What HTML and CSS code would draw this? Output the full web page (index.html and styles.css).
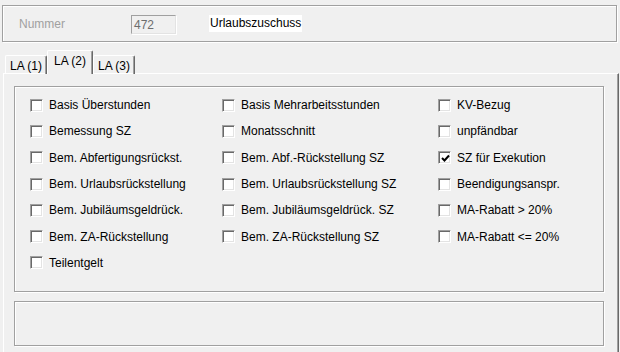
FILE: index.html
```html
<!DOCTYPE html>
<html lang="de">
<head>
    <meta charset="UTF-8">
    <title>Lohnart Urlaubszuschuss</title>
    <link rel="stylesheet" href="styles.css">
</head>
<body>
    <div class="head">
        <span class="lbl-nr">Nummer</span>
        <span class="nr-box">472</span>
        <span class="bez">Urlaubszuschuss</span>
    </div>

    <div class="tabs">
        <div class="tab">LA (1)</div>
        <div class="tab active">LA (2)</div>
        <div class="tab">LA (3)</div>
    </div>

    <div class="panel">
        <div class="group checks">
            <label class="chk"><span class="box"></span>Basis Überstunden</label>
            <label class="chk"><span class="box"></span>Basis Mehrarbeitsstunden</label>
            <label class="chk"><span class="box"></span>KV-Bezug</label>

            <label class="chk"><span class="box"></span>Bemessung SZ</label>
            <label class="chk"><span class="box"></span>Monatsschnitt</label>
            <label class="chk"><span class="box"></span>unpfändbar</label>

            <label class="chk"><span class="box"></span>Bem. Abfertigungsrückst.</label>
            <label class="chk"><span class="box"></span>Bem. Abf.-Rückstellung SZ</label>
            <label class="chk"><span class="box on"><svg width="9" height="9" viewBox="0 0 9 9"><path d="M1 4 L3.5 6.5 L8 1.5" fill="none" stroke="#000" stroke-width="2"/></svg></span>SZ für Exekution</label>

            <label class="chk"><span class="box"></span>Bem. Urlaubsrückstellung</label>
            <label class="chk"><span class="box"></span>Bem. Urlaubsrückstellung SZ</label>
            <label class="chk"><span class="box"></span>Beendigungsanspr.</label>

            <label class="chk"><span class="box"></span>Bem. Jubiläumsgeldrück.</label>
            <label class="chk"><span class="box"></span>Bem. Jubiläumsgeldrück. SZ</label>
            <label class="chk"><span class="box"></span>MA-Rabatt &gt; 20%</label>

            <label class="chk"><span class="box"></span>Bem. ZA-Rückstellung</label>
            <label class="chk"><span class="box"></span>Bem. ZA-Rückstellung SZ</label>
            <label class="chk"><span class="box"></span>MA-Rabatt &lt;= 20%</label>

            <label class="chk"><span class="box"></span>Teilentgelt</label>
        </div>
        <div class="group bottom"></div>
    </div>
</body>
</html>
```

FILE: styles.css
```css
body{
    margin: 0;
    width: 620px;
    height: 352px;
    background: #f0f0f0;
    font-family: "Liberation Sans", Arial, sans-serif;
    font-size: 12px;
    color: #000;
    overflow: hidden;
}
.head{
    margin: 5px 3px 0 2px;
    height: 35px;
    border: 1px solid #a0a0a0;
    box-shadow: inset 1px 1px 0 #fff, 1px 1px 0 #fff;
    display: flex;
    align-items: center;
}
.lbl-nr{
    color: #a0a0a0;
    margin-left: 16px;
    width: 112px;
}
.nr-box{
    width: 41px;
    height: 17px;
    line-height: 18px;
    padding-left: 2px;
    color: #6d6d6d;
    border: 1px solid;
    border-color: #a0a0a0 #e3e3e3 #e3e3e3 #a0a0a0;
    box-shadow: 1px 1px 0 #fff;
    margin-top: 1px;
}
.bez{
    margin-left: 33px;
    background: #fff;
    padding: 1px 1px 2px 1px;
}
.tabs{
    display: flex;
    align-items: flex-end;
    margin-top: 9px;
    padding-left: 5px;
    height: 23px;
    position: relative;
    z-index: 1;
}
.tab{
    width: 40px;
    height: 18px;
    text-align: center;
    line-height: 20px;
    border: 1px solid #fff;
    border-bottom: none;
    border-right: 1px solid #696969;
    box-shadow: inset -1px 0 0 #a0a0a0;
    border-radius: 2px 2px 0 0;
}
.tab.active{
    width: 44px;
    height: 23px;
    line-height: 20px;
    background: #f0f0f0;
    position: relative;
    z-index: 2;
}
.panel{
    margin: -1px 1px 0 3px;
    height: 276px;
    border: 1px solid #fff;
    border-right-color: #696969;
    border-bottom-color: #696969;
    box-shadow: inset -1px -1px 0 #a0a0a0;
    padding: 12px 14px 0 10px;
    display: flex;
    flex-direction: column;
    gap: 9px;
}
.group{
    border: 1px solid #a0a0a0;
    box-shadow: inset 1px 1px 0 #fff, 1px 1px 0 #fff;
}
.checks{
    height: 199px;
    padding: 5px 0 0 15px;
    display: grid;
    grid-template-columns: 192px 216px 1fr;
    grid-auto-rows: 26.3px;
    align-content: start;
}
.bottom{
    height: 43px;
}
.chk{
    display: flex;
    align-items: center;
    white-space: nowrap;
}
.box{
    width: 11px;
    height: 11px;
    border: 1px solid;
    border-color: #a0a0a0 #fff #fff #a0a0a0;
    box-shadow: inset 1px 1px 0 #696969, inset -1px -1px 0 #e3e3e3;
    background: #fff;
    margin-right: 6px;
    display: flex;
    align-items: center;
    justify-content: center;
    flex: none;
}
.box svg{
    margin: 1px 0 0 1px;
}
```
